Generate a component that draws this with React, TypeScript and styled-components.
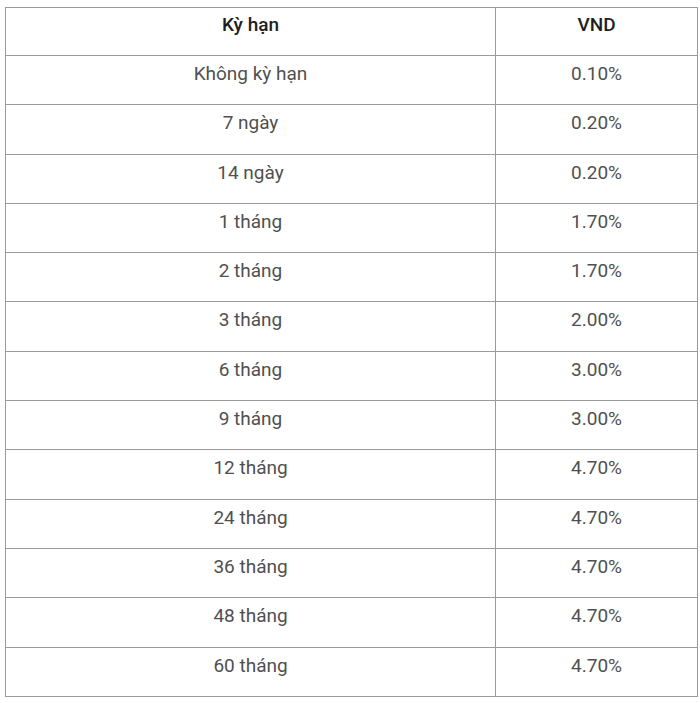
import React from 'react';
import styled, { createGlobalStyle } from 'styled-components';

const GlobalStyle = createGlobalStyle`
  body {
    margin: 0;
    background: #fff;
    font-family: Roboto, "Liberation Sans", Arial, sans-serif;
  }
`;

const Wrapper = styled.div`
  padding: 7px 3px 0 5px;
`;

const Table = styled.table`
  width: 693px;
  border-collapse: collapse;
  table-layout: fixed;
  border: 1px solid #9a9a9a;
`;

const Cell = styled.td<{ $head?: boolean }>`
  height: ${(p) => (p.$head ? '48px' : '49.3px')};
  box-sizing: border-box;
  padding: ${(p) => (p.$head ? '5px 0 0' : '6px 0 0')};
  vertical-align: top;
  text-align: center;
  border: 1px solid #9a9a9a;
  font-size: 19px;
  line-height: 24px;
  font-weight: ${(p) => (p.$head ? 500 : 400)};
  color: ${(p) => (p.$head ? '#1e1e1e' : '#505050')};
`;

const rows: [string, string][] = [
  ['Không kỳ hạn', '0.10%'],
  ['7 ngày', '0.20%'],
  ['14 ngày', '0.20%'],
  ['1 tháng', '1.70%'],
  ['2 tháng', '1.70%'],
  ['3 tháng', '2.00%'],
  ['6 tháng', '3.00%'],
  ['9 tháng', '3.00%'],
  ['12 tháng', '4.70%'],
  ['24 tháng', '4.70%'],
  ['36 tháng', '4.70%'],
  ['48 tháng', '4.70%'],
  ['60 tháng', '4.70%'],
];

const App = () => {
  return (
    <Wrapper>
      <GlobalStyle />
      <Table>
        <colgroup>
          <col style={{ width: 490 }} />
          <col />
        </colgroup>
        <thead>
          <tr>
            <Cell as="th" $head>
              Kỳ hạn
            </Cell>
            <Cell as="th" $head>
              VND
            </Cell>
          </tr>
        </thead>
        <tbody>
          {rows.map(([term, rate]) => (
            <tr key={term}>
              <Cell>{term}</Cell>
              <Cell>{rate}</Cell>
            </tr>
          ))}
        </tbody>
      </Table>
    </Wrapper>
  );
};

export default App;
